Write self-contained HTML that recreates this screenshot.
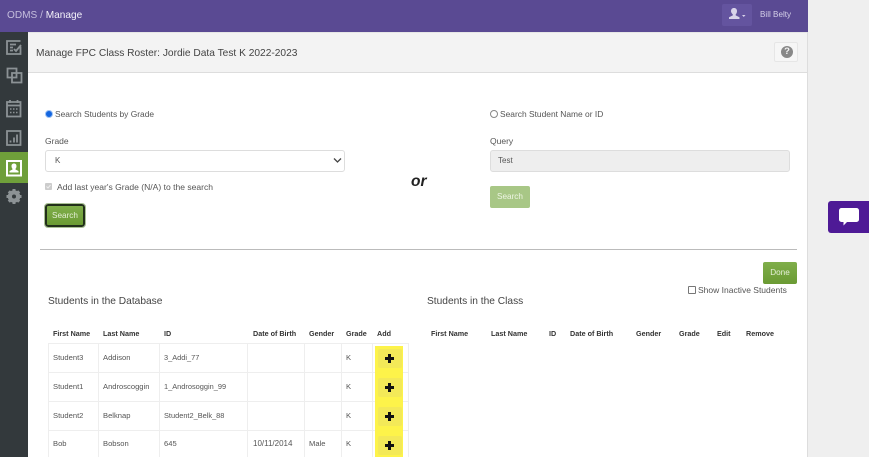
<!DOCTYPE html>
<html><head><meta charset="utf-8"><style>
html,body{margin:0;padding:0;width:869px;height:457px;overflow:hidden;background:#efefef;font-family:"Liberation Sans",sans-serif;color:#555}
body{filter:blur(.3px)}
.a{position:absolute;white-space:nowrap}
.t{font-size:8.5px;line-height:12px}
.r{font-size:7.6px;line-height:12px}
.th{font-size:7.2px;font-weight:bold;color:#333;line-height:12px}
.btn{position:absolute;background:linear-gradient(#7fae4a,#6a9a33);border-radius:2px;color:#e6f0d8;font-size:8.2px;text-align:center}
.plusbg{position:absolute;left:378px;width:24px;height:19px;background:#f3e958;border-radius:2px}
.plus{position:absolute;width:9px;height:9px;left:385px}
.plus:before{content:"";position:absolute;left:0;top:3.4px;width:9px;height:2.2px;background:#111}
.plus:after{content:"";position:absolute;left:3.4px;top:0;width:2.2px;height:9px;background:#111}
.hl{position:absolute;left:48px;width:361px;height:1px;background:#eee}
.vl{position:absolute;top:344px;width:1px;height:113px;background:#eee}
</style></head><body>
<div class="a" style="left:0;top:0;width:808px;height:32px;background:#5a4a93"></div>
<div class="a" style="left:807px;top:32px;width:1px;height:425px;background:#ddd"></div>
<div class="a" style="left:7px;top:8px;font-size:10.1px;line-height:16px;color:#c4bddd">ODMS / <span style="color:#f4f2fa">Manage</span></div>
<div class="a" style="left:722px;top:4px;width:30px;height:22px;background:#64549f;border-radius:2px"></div>
<svg class="a" style="left:727px;top:7px" width="20" height="14" viewBox="0 0 20 14"><path d="M7 1c2 0 3 1.300 3 3.200 0 1.500-.7 2.600-1.300 3.200v1l3.800 1.800V12H2v-1.800l3.800-1.800v-1C5.200 6.800 4 5.700 4 4.200 4 2.300 5 1 7 1z" fill="#d8d3ea"/><path d="M15 8h3.500l-1.750 2z" fill="#d8d3ea"/></svg>
<div class="a" style="left:760px;top:8px;font-size:8.1px;line-height:13px;color:#d5d0e8">Bill Belty</div>

<div class="a" style="left:0;top:32px;width:28px;height:425px;background:#33393c"></div>
<div class="a" style="left:0;top:152px;width:28px;height:31px;background:#6f9f3a"></div>
<svg class="a" style="left:0;top:32px" width="28" height="180" viewBox="0 0 28 180" fill="none" stroke="#8c9295" stroke-width="1.800">
<path d="M20.500 14.500V22H7V9h13.500M10 12.500h6M10 15.500h3M10 18.500h3M14 17l2 2 5-6"/>
<path d="M7.500 36.500h9v9h-9zM12 41h9.500v9.500H12z"/>
<path d="M7 70h13.500v14.500H7zM7 73.500h13.500"/><path d="M10 68v3M17.500 68v3"/>
<path d="M10 77h1.500M13 77h1.500M16 77h1.500M10 80.500h1.500M13 80.500h1.500M16 80.500h1.500" stroke-width="1.500"/>
<path d="M7 99h13.500v14H7z"/><path d="M10.500 110.500v-2M14 110.500v-5M17 110.500v-8" stroke-width="1.800"/>
<path d="M7 129h14v14.500H7z" stroke="#fff" stroke-width="2"/>
<path d="M14 131.500c1.800 0 2.500 1.200 2.500 2.700 0 1.200-.7 2.200-1 2.600v.7l3 1.500v1.500h-9v-1.500l3-1.500v-.7c-.3-.4-1-1.400-1-2.600 0-1.500.7-2.700 2.500-2.700z" fill="#fff" stroke="none"/>
<circle cx="14" cy="164.500" r="4.500" stroke-width="3.500"/>
<path d="M14 157v15M6.500 164.500h15M8.800 159.300l10.400 10.400M19.200 159.300L8.800 169.700" stroke-width="3"/>
<circle cx="14" cy="164.500" r="2" fill="#33393c" stroke="none"/>
</svg>

<div class="a" style="left:28px;top:32px;width:779px;height:425px;background:#fff"></div>
<div class="a" style="left:28px;top:32px;width:779px;height:41px;background:#f3f3f3;border-bottom:1px solid #ddd;border-top:1px solid #e6e6e6;box-sizing:border-box"></div>
<div class="a" style="left:36px;top:47px;font-size:10.2px;line-height:14px;color:#444">Manage FPC Class Roster: Jordie Data Test K 2022-2023</div>
<div class="a" style="left:774px;top:42px;width:24px;height:20px;background:#f6f6f6;border:1px solid #e6e6e6;border-radius:2px;box-sizing:border-box"></div>
<div class="a" style="left:781px;top:46px;width:12px;height:12px;border-radius:50%;background:#888;color:#f3f3f3;font-size:9.500px;font-weight:bold;line-height:12px;text-align:center">?</div>

<div class="a" style="left:45px;top:110px;width:6px;height:6px;border-radius:50%;background:#1466e0;border:1px solid #9cc2f5"></div>
<div class="a t" style="left:55px;top:108px;font-size:8.42px">Search Students by Grade</div>
<div class="a t" style="left:45px;top:135px">Grade</div>
<div class="a" style="left:45px;top:150px;width:300px;height:22px;border:1px solid #ddd;border-radius:3px;box-sizing:border-box;background:#fff"></div>
<div class="a t" style="left:55px;top:155px;font-size:8px">K</div>
<svg class="a" style="left:333px;top:157px" width="9" height="7" viewBox="0 0 9 7"><path d="M1 1.500l3.500 3.500L8 1.500" fill="none" stroke="#444" stroke-width="1.300"/></svg>
<div class="a" style="left:45px;top:183px;width:7px;height:7px;background:#ccc;border-radius:1px"></div>
<svg class="a" style="left:45px;top:183px" width="7" height="7" viewBox="0 0 7 7"><path d="M1.500 3.500l1.500 1.500 2.500-3" fill="none" stroke="#eee" stroke-width="1"/></svg>
<div class="a t" style="left:57px;top:181px;font-size:8.55px">Add last year's Grade (N/A) to the search</div>
<div class="btn" style="left:45px;top:204px;width:40px;height:23px;border:2px solid #22301a;outline:1px solid #a9bf95;box-sizing:border-box;line-height:19px;border-radius:3px">Search</div>

<div class="a" style="left:411px;top:173px;font-size:15.5px;line-height:18px;font-weight:bold;font-style:italic;color:#222">or</div>

<div class="a" style="left:490px;top:110px;width:6px;height:6px;border-radius:50%;border:1px solid #888;background:#fff"></div>
<div class="a t" style="left:500px;top:108px;font-size:8.42px">Search Student Name or ID</div>
<div class="a t" style="left:490px;top:135px">Query</div>
<div class="a" style="left:490px;top:150px;width:300px;height:22px;background:#eee;border:1px solid #ddd;border-radius:3px;box-sizing:border-box"></div>
<div class="a t" style="left:498px;top:155px;font-size:8px">Test</div>
<div class="btn" style="left:490px;top:186px;width:40px;height:22px;background:#a8c786;line-height:22px;color:#eef5e4">Search</div>

<div class="a" style="left:40px;top:249px;width:757px;height:1px;background:#bbb"></div>
<div class="btn" style="left:763px;top:262px;width:34px;height:22px;line-height:22px">Done</div>
<div class="a" style="left:688px;top:286px;width:6px;height:6px;border:1px solid #777;border-radius:1px;background:#fff"></div>
<div class="a t" style="left:698px;top:284px">Show Inactive Students</div>
<div class="a" style="left:48px;top:295px;font-size:10.2px;line-height:14px;color:#444">Students in the Database</div>
<div class="a" style="left:427px;top:295px;font-size:10.2px;line-height:14px;color:#444">Students in the Class</div>

<div class="a th" style="left:53px;top:328px">First Name</div>
<div class="a th" style="left:103px;top:328px">Last Name</div>
<div class="a th" style="left:164px;top:328px">ID</div>
<div class="a th" style="left:253px;top:328px">Date of Birth</div>
<div class="a th" style="left:309px;top:328px">Gender</div>
<div class="a th" style="left:346px;top:328px">Grade</div>
<div class="a th" style="left:377px;top:328px">Add</div>

<div class="a th" style="left:431px;top:328px">First Name</div>
<div class="a th" style="left:491px;top:328px">Last Name</div>
<div class="a th" style="left:549px;top:328px">ID</div>
<div class="a th" style="left:570px;top:328px">Date of Birth</div>
<div class="a th" style="left:636px;top:328px">Gender</div>
<div class="a th" style="left:679px;top:328px">Grade</div>
<div class="a th" style="left:717px;top:328px">Edit</div>
<div class="a th" style="left:746px;top:328px">Remove</div>

<div class="hl" style="top:343px"></div><div class="hl" style="top:372px"></div><div class="hl" style="top:401px"></div><div class="hl" style="top:430px"></div>
<div class="vl" style="left:48px"></div><div class="vl" style="left:98px"></div><div class="vl" style="left:159px"></div><div class="vl" style="left:247px"></div><div class="vl" style="left:304px"></div><div class="vl" style="left:341px"></div><div class="vl" style="left:372px"></div><div class="vl" style="left:408px"></div>

<div class="a" style="left:375px;top:346px;width:28px;height:111px;background:#fdf34a"></div>
<div class="plusbg" style="top:349px"></div><div class="plusbg" style="top:378px"></div><div class="plusbg" style="top:407px"></div><div class="plusbg" style="top:436px"></div>
<div class="plus" style="top:354px"></div><div class="plus" style="top:383px"></div><div class="plus" style="top:412px"></div><div class="plus" style="top:441px"></div>

<div class="a r" style="left:53px;top:352px">Student3</div><div class="a r" style="left:103px;top:352px">Addison</div><div class="a r" style="left:164px;top:352px;font-size:7.4px">3_Addi_77</div><div class="a r" style="left:346px;top:352px">K</div>
<div class="a r" style="left:53px;top:381px">Student1</div><div class="a r" style="left:103px;top:381px">Androscoggin</div><div class="a r" style="left:164px;top:381px;font-size:7.4px">1_Androsoggin_99</div><div class="a r" style="left:346px;top:381px">K</div>
<div class="a r" style="left:53px;top:410px">Student2</div><div class="a r" style="left:103px;top:410px">Belknap</div><div class="a r" style="left:164px;top:410px;font-size:7.4px">Student2_Belk_88</div><div class="a r" style="left:346px;top:410px">K</div>
<div class="a r" style="left:53px;top:438px">Bob</div><div class="a r" style="left:103px;top:438px">Bobson</div><div class="a r" style="left:164px;top:438px">645</div><div class="a r" style="left:253px;top:438px;font-size:8px">10/11/2014</div><div class="a r" style="left:309px;top:438px">Male</div><div class="a r" style="left:346px;top:438px">K</div>

<div class="a" style="left:828px;top:201px;width:41px;height:32px;background:#4e1a96;border-radius:3px 0 0 3px"></div>
<svg class="a" style="left:838px;top:207px" width="22" height="20" viewBox="0 0 22 20"><path d="M3.500 1h15A2.500 2.500 0 0 1 21 3.500v9a2.500 2.500 0 0 1-2.500 2.500H9l-3.500 3.500V15h-2A2.500 2.500 0 0 1 1 12.500v-9A2.500 2.500 0 0 1 3.500 1z" fill="#fff"/></svg>
</body></html>
